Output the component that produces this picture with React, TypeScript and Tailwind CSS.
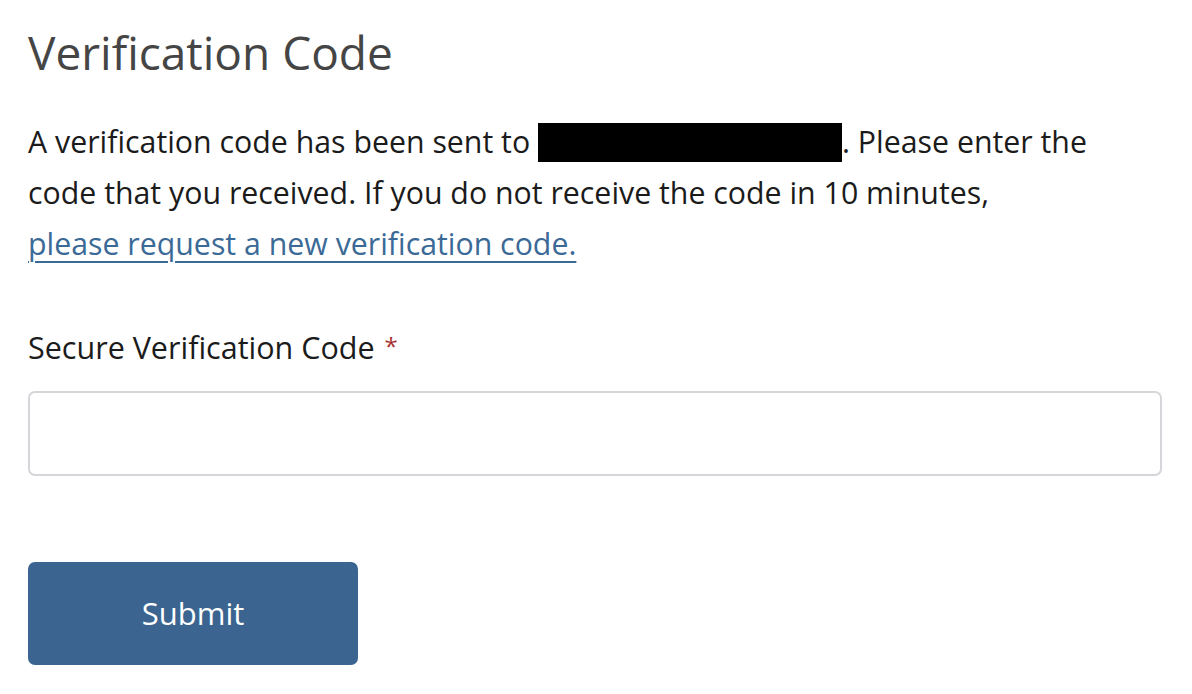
export default function App() {
  return (
    <div className="min-h-screen bg-white px-[28px] pt-[22px] font-['Open_Sans',sans-serif]">
      <div className="w-[1134px]">
        <h1 className="text-[46px] leading-[60px] text-[#454545]">
          Verification Code
        </h1>

        <p className="mt-[34px] text-[30.3px] leading-[51px] text-[#1b1b1b]">
          A verification code has been sent to{" "}
          <span className="inline-block w-[304px] h-[39px] align-[-9px] bg-black" />
          . Please enter the
          <br />
          code that you received. If you do not receive the code in 10 minutes,
          <br />
          <a href="#" className="text-[#3b6a97] underline underline-offset-[6px] decoration-[2px]">
            please request a new verification code.
          </a>
        </p>

        <form className="mt-[58px] flex flex-col">
          <label className="h-[40px] text-[30.5px] leading-[40px] text-[#1b1b1b]">
            Secure Verification Code{" "}
            <span className="ml-[2px] align-[4px] text-[24px] leading-none text-[#a83232]">*</span>
          </label>
          <input
            type="text"
            className="mt-[24px] h-[85px] w-full rounded-[7px] border-2 border-[#d6d6da] bg-white"
          />
          <button
            type="button"
            className="mt-[86px] h-[103px] w-[330px] rounded-[7px] bg-[#3b6590] text-[31px] text-white"
          >
            Submit
          </button>
        </form>
      </div>
    </div>
  );
}
